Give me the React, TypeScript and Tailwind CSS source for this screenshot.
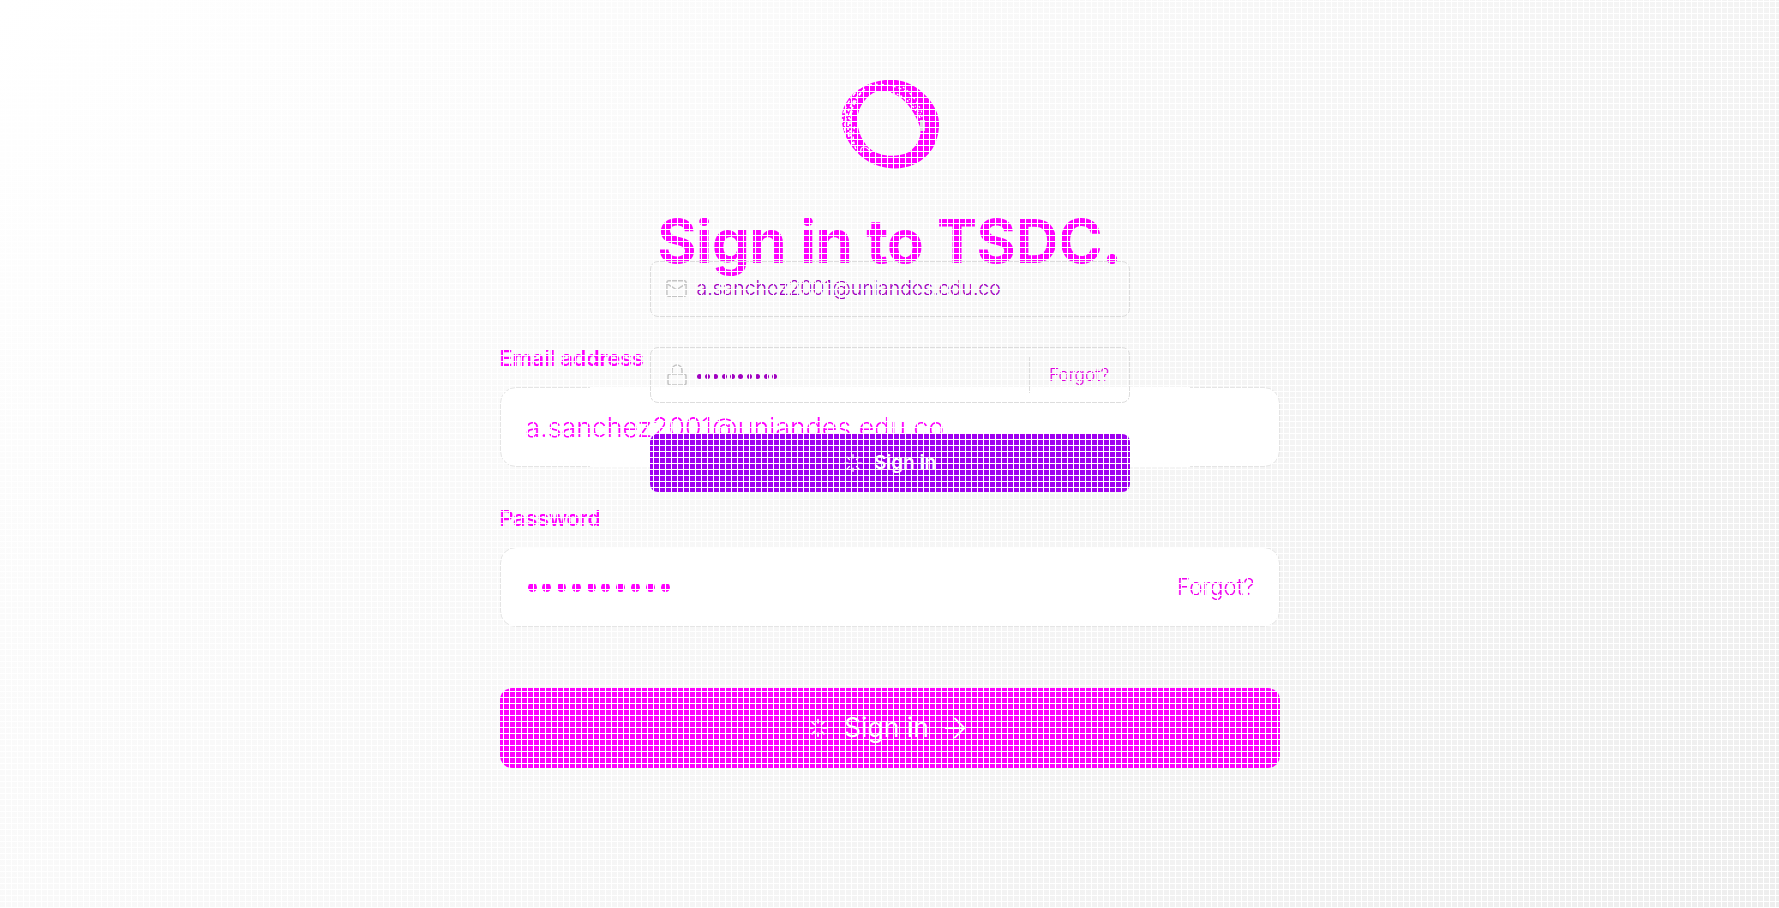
import { ArrowRight, Loader, Lock, Mail } from 'lucide-react'

function Logo() {
  return (
    <svg viewBox="0 0 110 100" className="w-[110px] h-[100px] shrink-0" aria-label="TSDC logo">
      <path
        fillRule="evenodd"
        fill="#ff00ff"
        d="M50 7 C62 5 78 10 88 20 C99 30 105 42 104 54 C103 70 95 84 80 91 C70 96 56 97 44 93 C30 89 18 78 11 64 C6 52 5 40 11 30 C18 17 34 9 50 7 Z
           M45 18 C35 19 26 29 23 41 C21 53 25 66 34 75 C44 84 62 85 74 79 C83 72 87 63 85 54 C81 42 73 29 63 23 C57 19 51 18 45 18 Z"
      />
      <g fill="none" stroke="#ffffff">
        <path d="M7 50 C8 36 15 24 28 12" strokeWidth="1.6" strokeDasharray="4 2 1 3" />
        <path d="M10 58 C9 42 16 28 31 15" strokeWidth="1.8" strokeDasharray="3 2" />
        <path d="M14 64 C11 50 15 36 25 21" strokeWidth="1.8" strokeDasharray="5 2 2 2" />
        <path d="M18 71 C14 60 14 48 17 38" strokeWidth="1.8" strokeDasharray="2 2" />
        <path d="M21 76 C17 68 18 60 20 52" strokeWidth="1.5" strokeDasharray="3 2" />
        <path d="M26 80 C24 72 32 72 36 80" strokeWidth="1.2" />
        <path d="M28 13 C44 9 62 12 76 21" strokeWidth="1.2" strokeDasharray="3 3" />
        <path d="M54 19 C68 21 78 31 85 45" strokeWidth="1.5" strokeDasharray="2 2" />
        <path d="M68 14 C78 22 85 32 89 46" strokeWidth="1.2" strokeDasharray="2 3" />
        <path d="M74 26 C80 32 84 38 87 44" strokeWidth="1.2" strokeDasharray="1 2" />
      </g>
      <rect x="85" y="47" width="5" height="11" fill="#dddddd" />
    </svg>
  )
}

function PasswordDots({ size, gap, color }: { size: string; gap: string; color: string }) {
  return (
    <div className={`flex ${gap}`}>
      {Array.from({ length: 10 }).map((_, i) => (
        <span key={i} className={`${size} ${color} rounded-full`} />
      ))}
    </div>
  )
}

// second, smaller copy of the form that sits on top of the big one
function OverlayForm() {
  return (
    <div className="absolute top-[261px] left-1/2 -translate-x-1/2 w-[480px] flex flex-col">
      <div className="h-14 flex items-center pl-[14px] rounded-lg border border-[#dddddd]">
        <Mail className="-mt-[2px] w-[23px] h-[23px] text-[#c4c4c4] shrink-0" strokeWidth={1.5} />
        <span className="ml-[9px] text-[19.4px] font-light text-[#a000c0]">
          a.sanchez2001@uniandes.edu.co
        </span>
      </div>
      <div className="mt-[30px] h-14 flex items-center pl-[14px] rounded-lg border border-[#dddddd]">
        <Lock className="w-6 h-6 text-[#c4c4c4] shrink-0" strokeWidth={1.5} />
        <div className="ml-[8px] mt-[2px]">
          <PasswordDots size="w-[5px] h-[5px]" gap="gap-[3.4px]" color="bg-[#a000c0]" />
        </div>
        <div className="ml-auto h-[36px] w-px bg-[#dddddd]" />
        <span className="w-[99px] text-center text-[17.3px] font-light text-[#e000e0]">Forgot?</span>
      </div>
      <button
        type="button"
        className="mt-[31px] h-[58px] flex items-center justify-center gap-[11px] rounded-lg bg-[#a000f0] text-white text-[19px] font-semibold"
      >
        <Loader className="w-[20px] h-[20px]" strokeWidth={1.5} />
        Sign in
      </button>
    </div>
  )
}

export default function App() {
  return (
    <div className="relative h-screen overflow-hidden bg-[linear-gradient(135deg,#ffffff,#eeeeee)] font-['Inter',sans-serif]">
      <main className="mx-auto w-[780px] pt-[73px] flex flex-col items-center">
        <Logo />
        <h1 className="mt-[32px] text-[60px] leading-[72px] font-bold tracking-[-0.5px] text-[#ff00ff]">
          Sign in to TSDC.
        </h1>

        <form className="mt-[67px] w-full flex flex-col">
          <label className="text-[21.4px] leading-7 font-semibold text-[#ff00ff]">Email address</label>
          <div className="relative mt-[15px] h-20 flex items-center px-[25px] rounded-2xl border border-[#e5e5e5] bg-white">
            <span className="absolute -top-px left-[89px] w-[600px] h-px bg-white" />
            <span className="absolute -bottom-px left-[89px] w-[600px] h-px bg-white" />
            <span className="text-[26.7px] font-light text-[#ff00ff]">a.sanchez2001@uniandes.edu.co</span>
          </div>

          <label className="mt-[37px] text-[21.4px] leading-7 font-semibold text-[#ff00ff]">Password</label>
          <div className="relative mt-[15px] h-20 flex items-center justify-between pl-[27px] pr-6 rounded-2xl border border-[#e5e5e5] bg-white">
            <span className="absolute -top-px left-[89px] w-[600px] h-px bg-white" />
            <PasswordDots size="w-[9px] h-[9px]" gap="gap-[5.8px]" color="bg-[#ff00ff]" />
            <span className="text-[22.3px] font-light text-[#f000f0]">Forgot?</span>
          </div>

          <button
            type="button"
            className="mt-[61px] h-20 flex items-center justify-center gap-[16px] rounded-xl bg-[#ff00ff] text-white text-[26.5px] font-normal"
          >
            <Loader className="w-[20px] h-[20px]" strokeWidth={2} />
            Sign in
            <ArrowRight className="-ml-[6px] w-8 h-8" strokeWidth={1.5} />
          </button>
        </form>
      </main>

      <OverlayForm />

      {/* white pixel grid over the whole page */}
      <div className="absolute inset-0 pointer-events-none bg-[linear-gradient(to_right,transparent_5px,#ffffff_5px),linear-gradient(to_bottom,transparent_5px,#ffffff_5px)] bg-[length:6px_6px] bg-[position:0_2px]" />
    </div>
  )
}
